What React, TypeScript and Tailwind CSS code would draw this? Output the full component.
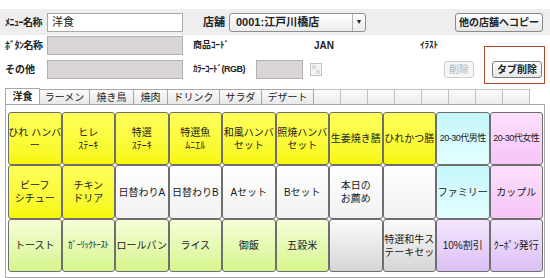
import React from 'react'

type Cell = { label: string; tone: string; tight?: boolean }

const TONES: Record<string, string> = {
  yellow: 'bg-gradient-to-b from-[#ffff5a] to-[#f7f700]',
  white: 'bg-gradient-to-b from-[#ffffff] to-[#f2f2f2]',
  cyan: 'bg-gradient-to-b from-[#c4f7fb] to-[#e4feff]',
  pink: 'bg-gradient-to-b from-[#fde0fd] to-[#f7c4f7]',
  lime: 'bg-gradient-to-b from-[#f6fed8] to-[#d6f58c]',
  gray: 'bg-gradient-to-b from-[#fbfbfb] to-[#d6d6d6]',
  violet: 'bg-gradient-to-b from-[#f3e6fd] to-[#dcc0f6]',
}

const CELLS: Cell[] = [
  { label: 'ひれ ハンバ\nー', tone: 'yellow' },
  { label: 'ヒレ\nｽﾃｰｷ', tone: 'yellow' },
  { label: '特選\nｽﾃｰｷ', tone: 'yellow' },
  { label: '特選魚\nﾑﾆｴﾙ', tone: 'yellow' },
  { label: '和風ハンバ\nセット', tone: 'yellow' },
  { label: '照焼ハンバ\nセット', tone: 'yellow' },
  { label: '生姜焼き膳', tone: 'yellow' },
  { label: 'ひれかつ膳', tone: 'yellow' },
  { label: '20-30代男性', tone: 'cyan', tight: true },
  { label: '20-30代女性', tone: 'pink', tight: true },

  { label: 'ビーフ\nシチュー', tone: 'yellow' },
  { label: 'チキン\nドリア', tone: 'yellow' },
  { label: '日替わりA', tone: 'white' },
  { label: '日替わりB', tone: 'white' },
  { label: 'Aセット', tone: 'white' },
  { label: 'Bセット', tone: 'white' },
  { label: '本日の\nお薦め', tone: 'white' },
  { label: '', tone: 'white' },
  { label: 'ファミリー', tone: 'cyan' },
  { label: 'カップル', tone: 'pink' },

  { label: 'トースト', tone: 'lime' },
  { label: 'ｶﾞｰﾘｯｸﾄｰｽﾄ', tone: 'lime', tight: true },
  { label: 'ロールパン', tone: 'lime' },
  { label: 'ライス', tone: 'lime' },
  { label: '御飯', tone: 'lime' },
  { label: '五穀米', tone: 'lime' },
  { label: '', tone: 'gray' },
  { label: '特選和牛ス\nテーキセッ', tone: 'gray' },
  { label: '10%割引', tone: 'violet' },
  { label: 'ｸｰﾎﾟﾝ発行', tone: 'violet' },
]

const TABS = [
  { label: '洋食', w: 'w-[35px]' },
  { label: 'ラーメン', w: 'w-[50px]' },
  { label: '焼き鳥', w: 'w-[44px]' },
  { label: '焼肉', w: 'w-[34px]' },
  { label: 'ドリンク', w: 'w-[52px]' },
  { label: 'サラダ', w: 'w-[42px]' },
  { label: 'デザート', w: 'w-[52px]' },
]

const font = { fontFamily: '"Liberation Sans", "Noto Sans CJK JP", sans-serif' }

function GrayBox({ w }: { w: string }) {
  return <div className={`${w} h-[19px] bg-[#dad6d6] border border-[#b4b0b0]`} />
}

export default function App() {
  return (
    <div
      className="relative w-[550px] h-[278px] bg-white overflow-hidden text-[10px] text-[#222]"
      style={font}
    >
      {/* form rows */}
      <div className="pt-[9px]">
        <div className="h-[26px] bg-[#eeeeee] flex items-center">
          <span className="w-[47px] pl-[5px] font-bold tracking-[-0.5px]">ﾒﾆｭｰ名称</span>
          <div className="w-[136px] h-[19px] bg-white border border-[#a8a8a8] flex items-center pl-[4px] text-[11px]">
            洋食
          </div>
          <span className="ml-[20px] w-[26px] font-bold text-[11px]">店舗</span>
          <div className="w-[137px] h-[19px] rounded-[3px] border border-[#8e8e8e] bg-gradient-to-b from-white to-[#ececec] flex items-center">
            <span className="flex-1 pl-[6px] font-bold text-[11px]">0001:江戸川橋店</span>
            <span className="w-[13px] h-full border-l border-[#b0b0b0] flex items-center justify-center text-[7px]">
              ▼
            </span>
          </div>
          <div className="ml-[89px] w-[88px] h-[19px] rounded-[3px] border border-[#8a8a8a] bg-gradient-to-b from-white to-[#e6e6e6] flex items-center justify-center font-bold">
            他の店舗へコピー
          </div>
        </div>

        <div className="h-[19px] mt-[1px] flex items-center">
          <span className="w-[47px] pl-[5px] font-bold tracking-[-0.5px]">ﾎﾞﾀﾝ名称</span>
          <GrayBox w="w-[136px]" />
          <span className="ml-[10px] w-[121px] font-bold text-[9px]">商品ｺｰﾄﾞ</span>
          <span className="w-[106px] font-bold">JAN</span>
          <span className="font-bold text-[9px]">ｲﾗｽﾄ</span>
        </div>

        <div className="h-[19px] mt-[5px] flex items-center">
          <span className="w-[47px] pl-[5px] font-bold">その他</span>
          <GrayBox w="w-[136px]" />
          <span className="ml-[10px] w-[63px] font-bold text-[9px] tracking-[-0.5px]">ｶﾗｰｺｰﾄﾞ(RGB)</span>
          <GrayBox w="w-[47px]" />
          <div className="ml-[7px] w-[12px] h-[13px] border border-[#c4c4c4] bg-[#f4f4f4] relative">
            <div className="absolute left-[1px] top-[1px] w-[4px] h-[4px] bg-[#dcdcdc]" />
            <div className="absolute right-[1px] bottom-[1px] w-[4px] h-[4px] bg-[#dcdcdc]" />
          </div>
          <div className="ml-[122px] w-[30px] h-[17px] rounded-[3px] border border-[#cfcfcf] bg-[#f6f6f6] flex items-center justify-center text-[#b0b0b0]">
            削除
          </div>
          <div className="ml-[18px] w-[50px] h-[17px] rounded-[3px] border border-[#7c7c7c] bg-gradient-to-b from-white to-[#e8e8e8] flex items-center justify-center font-bold">
            タブ削除
          </div>
        </div>
      </div>

      {/* highlight around the tab delete button */}
      <div className="absolute left-[484px] top-[46px] w-[61px] h-[38px] border border-[#b04a2a]" />

      {/* tabs */}
      <div className="mt-[10px] pl-[5px] flex items-end h-[15px]">
        {TABS.map((t, i) => (
          <div
            key={t.label}
            className={`${t.w} flex items-center justify-center border-t border-r border-[#a8a8a8] ${
              i === 0
                ? 'h-[16px] bg-white border-l font-bold relative z-10'
                : 'h-[15px] bg-gradient-to-b from-[#fbfbfb] to-[#e8e8e8]'
            }`}
          >
            {t.label}
          </div>
        ))}
        {Array.from({ length: 8 }).map((_, i) => (
          <div
            key={i}
            className="w-[27px] h-[15px] border-t border-r border-[#c0c0c0] bg-gradient-to-b from-[#fbfbfb] to-[#ececec]"
          />
        ))}
      </div>

      {/* button panel */}
      <div className="mx-[5px] h-[174px] border border-[#a8a8a8] bg-white pl-[2px] pt-[7px]">
        <div className="w-[535px] grid grid-cols-10 grid-rows-[53px_54px_53px]">
          {CELLS.map((c, i) => (
            <div
              key={i}
              className={`${TONES[c.tone]} border border-[#6e6e6e] rounded-[3px] flex items-center justify-center text-center whitespace-pre leading-[13px] text-[#1a1a1a] ${
                c.tight ? 'text-[9px] tracking-[-0.5px]' : 'text-[10px]'
              }`}
            >
              {c.label}
            </div>
          ))}
        </div>
      </div>
    </div>
  )
}
